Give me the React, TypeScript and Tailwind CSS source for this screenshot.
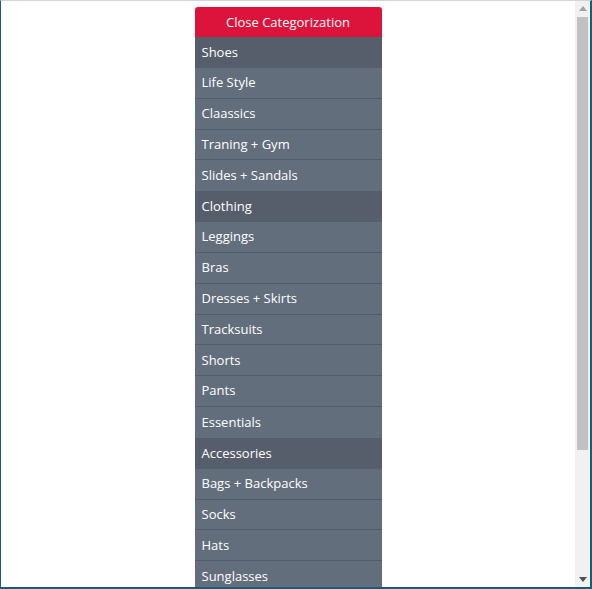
const groups: { title: string; items: string[] }[] = [
  {
    title: "Shoes",
    items: ["Life Style", "Claassics", "Traning + Gym", "Slides + Sandals"],
  },
  {
    title: "Clothing",
    items: [
      "Leggings",
      "Bras",
      "Dresses + Skirts",
      "Tracksuits",
      "Shorts",
      "Pants",
      "Essentials",
    ],
  },
  {
    title: "Accessories",
    items: ["Bags + Backpacks", "Socks", "Hats", "Sunglasses"],
  },
];

function Scrollbar() {
  return (
    <div className="w-[15px] shrink-0 bg-[#f1f1f1] flex flex-col">
      <div className="h-[15px] flex items-center justify-center">
        <svg width="8" height="5" viewBox="0 0 8 5">
          <path d="M0 5 L4 0 L8 5 Z" fill="#a3a3a3" />
        </svg>
      </div>
      <div className="flex-1 px-[2px] pt-[1px]">
        <div className="h-[433px] bg-[#c1c1c1]" />
      </div>
      <div className="h-[15px] flex items-center justify-center">
        <svg width="8" height="5" viewBox="0 0 8 5">
          <path d="M0 0 L8 0 L4 5 Z" fill="#505050" />
        </svg>
      </div>
    </div>
  );
}

export default function App() {
  return (
    <div
      className="w-[592px] h-[589px] bg-white border-t border-l border-r-2 border-b-2 border-t-[#d4d4d4] border-l-[#1b5b78] border-r-[#1b5b78] border-b-[#1b5b78] flex overflow-hidden"
      style={{ fontFamily: '"Open Sans", "Liberation Sans", sans-serif' }}
    >
      <div className="flex-1 overflow-hidden">
        <div className="w-[187px] mx-auto mt-[6px]">
          <button className="w-full h-[30px] pt-px rounded-t-[3px] bg-[#dc143c] text-white text-[13px] flex items-center justify-center">
            Close Categorization
          </button>
          {groups.map((g) => (
            <div key={g.title}>
              <div className="h-[31px] bg-[#575e6b] text-white text-[13px] flex items-center px-[7px]">
                {g.title}
              </div>
              {g.items.map((item, i) => (
                <div
                  key={item}
                  className={
                    "h-[30.8px] bg-[#636e7d] text-white text-[13px] flex items-center px-[7px] " +
                    (i < g.items.length - 1 ? "border-b border-[#535c68]" : "")
                  }
                >
                  {item}
                </div>
              ))}
            </div>
          ))}
        </div>
      </div>
      <Scrollbar />
    </div>
  );
}
